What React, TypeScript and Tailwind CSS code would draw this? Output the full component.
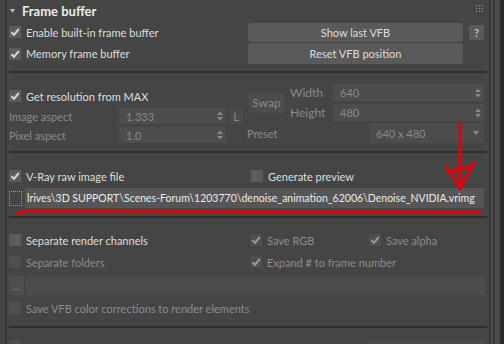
import type { ReactNode } from "react";

const font = "font-['Lato','Noto_Sans',sans-serif]";

const Check = ({ checked, disabled }: { checked?: boolean; disabled?: boolean }) => (
  <span
    className={`flex h-[12px] w-[12px] shrink-0 items-center justify-center ${
      disabled ? "bg-[#4f4f4f]" : "bg-[#5c5c5c]"
    }`}
  >
    {checked ? (
      <svg width="10" height="10" viewBox="0 0 10 10">
        <path
          d="M1.5 5.2 L4 7.8 L8.8 2"
          fill="none"
          stroke={disabled ? "#9a9a9a" : "#d8d8d8"}
          strokeWidth="2"
        />
      </svg>
    ) : null}
  </span>
);

const CheckRow = ({
  label,
  checked,
  disabled
}: {
  label: string;
  checked?: boolean;
  disabled?: boolean;
}) => (
  <div className="flex items-center gap-[5px]">
    <Check checked={checked} disabled={disabled} />
    <span className={disabled ? "text-[#8c8c8c]" : "text-[#dedede]"}>{label}</span>
  </div>
);

const Spinner = () => (
  <svg width="6" height="10" viewBox="0 0 6 10" className="shrink-0">
    <path d="M0 4 L3 0.5 L6 4 Z M0 6 L3 9.5 L6 6 Z" fill="#8a8a8a" />
  </svg>
);

const Field = ({ value, className }: { value: string; className: string }) => (
  <div className={`flex items-center justify-between bg-[#4d4d4d] pl-[7px] pr-[3px] text-[#8a8a8a] ${className}`}>
    <span>{value}</span>
    <Spinner />
  </div>
);

const Separator = ({ className }: { className: string }) => (
  <div className={`h-[2px] w-[478px] bg-[#2f2f2f] ${className}`} />
);

const Button = ({ children, className }: { children: ReactNode; className: string }) => (
  <div className={`flex items-center justify-center rounded-[3px] bg-[#5a5a5a] text-[#dedede] ${className}`}>
    {children}
  </div>
);

export default function App() {
  return (
    <div className={`relative flex h-[344px] w-[504px] overflow-hidden bg-[#454545] text-[11px] leading-none ${font}`}>
      <div className="w-[5px] shrink-0 bg-[#444444]" />
      <div className="w-[2px] shrink-0 bg-[#393939]" />

      <div className="flex w-[482px] shrink-0 flex-col pl-[2px] *:shrink-0">
        <div className="flex h-[22px] items-center justify-between pr-[6px]">
          <div className="flex items-center gap-[7px] pl-[1px]">
            <svg width="5" height="4" viewBox="0 0 5 4">
              <path d="M0 0 L5 0 L2.5 4 Z" fill="#bdbdbd" />
            </svg>
            <span className="text-[13px] font-bold text-[#ececec]">Frame buffer</span>
          </div>
          <svg width="7" height="7" viewBox="0 0 7 7" className="mb-[6px]">
            {[0, 3, 6].map((y) =>
              [0, 3, 6].map((x) => <rect key={`${x}-${y}`} x={x} y={y} width="1.2" height="1.2" fill="#9a9a9a" />)
            )}
          </svg>
        </div>

        <div className="flex h-[20px] items-center">
          <div className="w-[239px]">
            <CheckRow label="Enable built-in frame buffer" checked />
          </div>
          <Button className="h-[19px] w-[215px]">Show last VFB</Button>
          <div className="ml-[6px] flex h-[15px] w-[15px] items-center justify-center rounded-[2px] bg-[#5a5a5a] text-[#d8d8d8]">
            ?
          </div>
        </div>

        <div className="mt-[1px] flex h-[21px] items-center">
          <div className="w-[239px]">
            <CheckRow label="Memory frame buffer" checked />
          </div>
          <Button className="h-[21px] w-[215px]">Reset VFB position</Button>
        </div>

        <Separator className="mt-[7px]" />

        <div className="mt-[11px] flex">
          <div className="flex w-[239px] flex-col">
            <div className="flex h-[24px] items-center">
              <CheckRow label="Get resolution from MAX" checked />
            </div>
            <div className="flex h-[16px] items-center text-[#8a8a8a]">
              <span className="w-[110px]">Image aspect</span>
              <Field value="1.333" className="h-[16px] w-[107px]" />
              <div className="ml-[3px] flex h-[15px] w-[14px] items-center justify-center bg-[#4b4b4b] text-[#8a8a8a]">L</div>
            </div>
            <div className="mt-[3px] flex h-[16px] items-center text-[#8a8a8a]">
              <span className="w-[110px]">Pixel aspect</span>
              <Field value="1.0" className="h-[16px] w-[107px]" />
            </div>
          </div>

          <div className="flex flex-col">
            <div className="flex">
              <div className="flex w-[42px] items-center">
                <div className="flex h-[20px] w-[37px] items-center justify-center rounded-[3px] bg-[#4c4c4c] text-[12px] text-[#8a8a8a]">
                  Swap
                </div>
              </div>
              <div className="flex flex-col gap-[3px] text-[12px] text-[#8a8a8a]">
                <div className="flex h-[17px] items-center">
                  <span className="w-[43px]">Width</span>
                  <Field value="640" className="h-[17px] w-[151px] text-[11px]" />
                </div>
                <div className="flex h-[17px] items-center">
                  <span className="w-[43px]">Height</span>
                  <Field value="480" className="h-[17px] w-[151px] text-[11px]" />
                </div>
              </div>
            </div>
            <div className="mt-[2px] flex h-[20px] items-center text-[#8a8a8a]">
              <span className="-ml-[1px] w-[122px]">Preset</span>
              <div className="flex h-[20px] w-[115px] items-center justify-between bg-[#4c4c4c] pl-[7px] pr-[5px]">
                <span>640 x 480</span>
                <svg width="6" height="4" viewBox="0 0 6 4">
                  <path d="M0 0 L6 0 L3 4 Z" fill="#8a8a8a" />
                </svg>
              </div>
            </div>
          </div>
        </div>

        <Separator className="mt-[8px]" />

        <div className="mt-[13px] flex h-[20px] items-center">
          <div className="w-[242px]">
            <CheckRow label="V-Ray raw image file" checked />
          </div>
          <CheckRow label="Generate preview" />
        </div>

        <div className="mt-[2px] flex h-[20px] items-center">
          <div className="mr-[3px] h-[15px] w-[13px] border border-dotted border-[#9a9a9a]" />
          <div className="flex h-[20px] w-[459px] items-center overflow-hidden whitespace-nowrap bg-[#565656] pl-[2px] text-[10.5px] text-[#ececec]">
            lrives\3D SUPPORT\Scenes-Forum\1203770\denoise_animation_62006\Denoise_NVIDIA.vrimg
          </div>
        </div>

        <Separator className="mt-[8px]" />

        <div className="mt-[12px] flex h-[20px] items-center">
          <div className="w-[241px]">
            <CheckRow label="Separate render channels" />
          </div>
          <div className="w-[119px]">
            <CheckRow label="Save RGB" checked disabled />
          </div>
          <CheckRow label="Save alpha" checked disabled />
        </div>

        <div className="mt-[2px] flex h-[20px] items-center">
          <div className="w-[241px]">
            <CheckRow label="Separate folders" disabled />
          </div>
          <CheckRow label="Expand # to frame number" checked disabled />
        </div>

        <div className="mt-[4px] flex h-[19px] items-center">
          <div className="mr-[2px] flex h-[19px] w-[15px] items-end justify-center bg-[#4e4e4e] pb-[4px] text-[9px] text-[#8a8a8a]">
            ...
          </div>
          <div className="h-[19px] w-[459px] bg-[#4c4c4c]" />
        </div>

        <div className="mt-[4px] flex h-[18px] items-center">
          <CheckRow label="Save VFB color corrections to render elements" disabled />
        </div>

        <Separator className="mt-[9px]" />

        <div className="mt-[12px] flex h-[12px] items-start">
          <div className="w-[360px]">
            <Check disabled />
          </div>
          <div className="h-[12px] w-[115px] bg-[#4c4c4c]" />
        </div>
      </div>

      <div className="w-[2px] shrink-0 bg-[#3a3a3a]" />
      <div className="w-[2px] shrink-0 bg-[#4e4e4e]" />
      <div className="w-[2px] shrink-0 bg-[#383838]" />
      <div className="w-[5px] shrink-0 bg-[#4a4a4a]" />
      <div className="w-[4px] shrink-0 bg-[#2b2b2b]" />

      <svg className="pointer-events-none absolute inset-0" width="504" height="344" viewBox="0 0 504 344">
        <g fill="none" stroke="#e4000b" strokeWidth="3" strokeLinecap="round" strokeLinejoin="round">
          <path d="M460 124 C 461 140, 459 160, 460 186" />
          <path d="M446 166 L460 189 L474 162" />
          <path d="M448 172 L472 166" />
          <path d="M17 214 C 22 210, 30 211, 60 211 L 300 212 C 380 211, 450 213, 480 212" />
        </g>
      </svg>
    </div>
  );
}
